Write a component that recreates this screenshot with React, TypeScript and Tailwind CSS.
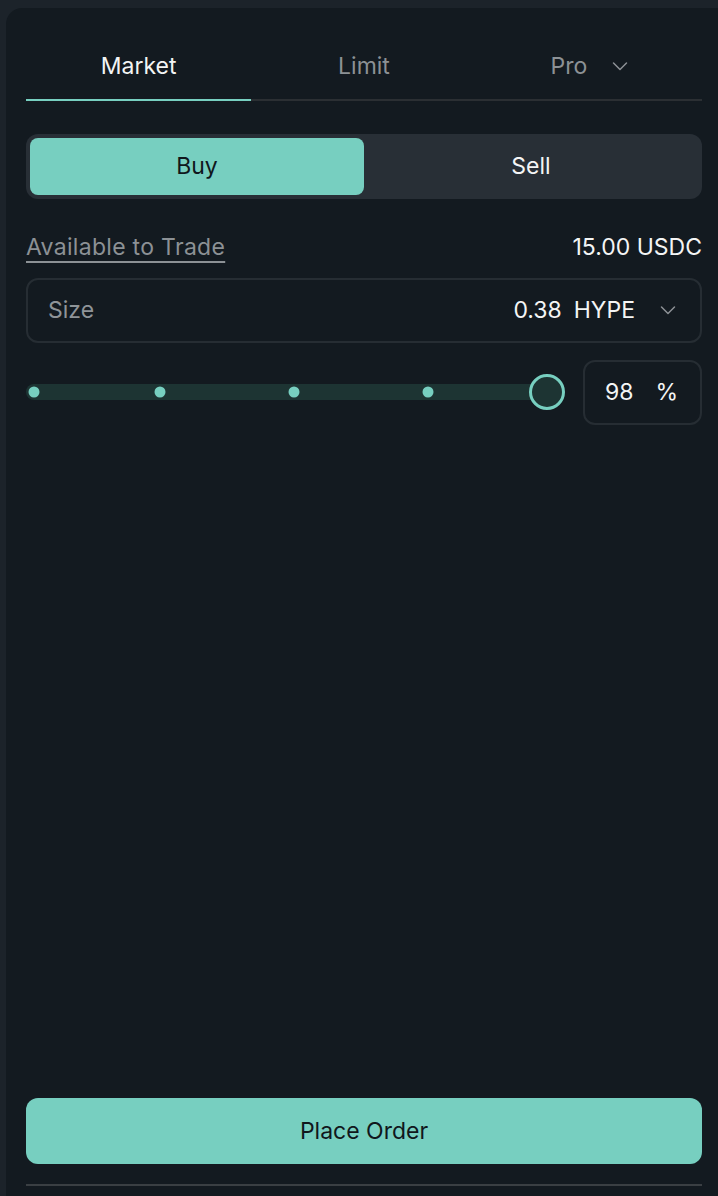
import React from "react";

const Chevron: React.FC<{ className?: string }> = ({ className }) => (
  <svg
    className={className}
    width="16"
    height="10"
    viewBox="0 0 16 10"
    fill="none"
    stroke="currentColor"
    strokeWidth="1.5"
    strokeLinecap="round"
    strokeLinejoin="round"
  >
    <path d="M1.5 2 L8 8.5 L14.5 2" />
  </svg>
);

const tabs = [
  { label: "Market", active: true, chevron: false },
  { label: "Limit", active: false, chevron: false },
  { label: "Pro", active: false, chevron: true },
];

const marks = [8, 134, 268, 402];

const App: React.FC = () => {
  return (
    <div
      className="h-[1196px] w-[718px] bg-[#1c232a] pt-2 pl-1.5 overflow-hidden"
      style={{ fontFamily: "Inter, 'Liberation Sans', sans-serif" }}
    >
      <div className="flex h-full flex-col rounded-tl-2xl bg-[#131a20] pt-[22px] pl-5 pr-4">
        {/* tabs */}
        <div className="flex">
          {tabs.map((t) => (
            <div
              key={t.label}
              className={
                t.active
                  ? "flex h-[71px] flex-1 items-center justify-center border-b-2 border-[#77cfc0] pt-[3px] text-[23px] text-[#f2f4f4]"
                  : "flex h-[71px] flex-1 items-center justify-center border-b-2 border-[#2b2f33] pt-[3px] text-[23px] text-[#8c9195]"
              }
            >
              <span>{t.label}</span>
              {t.chevron && <Chevron className="ml-[25px] text-[#8c9195]" />}
            </div>
          ))}
        </div>

        {/* buy / sell */}
        <div className="mt-[33px] flex h-[65px] rounded-xl bg-[#282f36] p-1">
          <div className="flex flex-1 items-center justify-center rounded-lg bg-[#77cfc0] text-[23px] text-[#10171c]">
            Buy
          </div>
          <div className="flex flex-1 items-center justify-center text-[23px] text-[#f4f5f5]">
            Sell
          </div>
        </div>

        {/* available */}
        <div className="mt-[31px] flex items-center justify-between text-[23px]">
          <span className="tracking-[0.3px] text-[#8c9195] underline decoration-[#8c9195] decoration-2 underline-offset-[6px]">
            Available to Trade
          </span>
          <span className="text-[#f4f5f5]">15.00 USDC</span>
        </div>

        {/* size */}
        <div className="mt-[13px] flex h-[65px] items-center rounded-xl border-2 border-[#262d33] pl-5 pr-6 text-[23px]">
          <span className="text-[#8f9498]">Size</span>
          <span className="ml-auto text-[#f4f5f5]">0.38</span>
          <span className="ml-3 text-[#f4f5f5]">HYPE</span>
          <Chevron className="ml-[25px] text-[#8c9195]" />
        </div>

        {/* slider */}
        <div className="mt-[17px] flex items-center gap-[36px]">
          <div className="relative h-[16px] flex-1 rounded-l-full bg-[#1d3433]">
            {marks.map((m) => (
              <span
                key={m}
                className="absolute top-1/2 h-[11px] w-[11px] -translate-x-1/2 -translate-y-1/2 rounded-full bg-[#77cfc0]"
                style={{ left: m }}
              />
            ))}
            <span className="absolute right-[-18px] top-1/2 h-[36px] w-[36px] -translate-y-1/2 rounded-full border-[3px] border-[#77cfc0] bg-[#1d3433]" />
          </div>
          <div className="flex h-[65px] w-[119px] items-center rounded-xl border-2 border-[#262d33] pl-5 text-[23px] text-[#f4f5f5]">
            <span>98</span>
            <span className="ml-[22px]">%</span>
          </div>
        </div>

        <div className="flex-1" />

        {/* place order */}
        <button className="flex h-[66px] w-full items-center justify-center rounded-xl bg-[#77cfc0] text-[23px] text-[#10171c]">
          Place Order
        </button>
        <div className="mt-[20px] mb-[10px] h-[2px] bg-[#3a3f43]" />
      </div>
    </div>
  );
};

export default App;
